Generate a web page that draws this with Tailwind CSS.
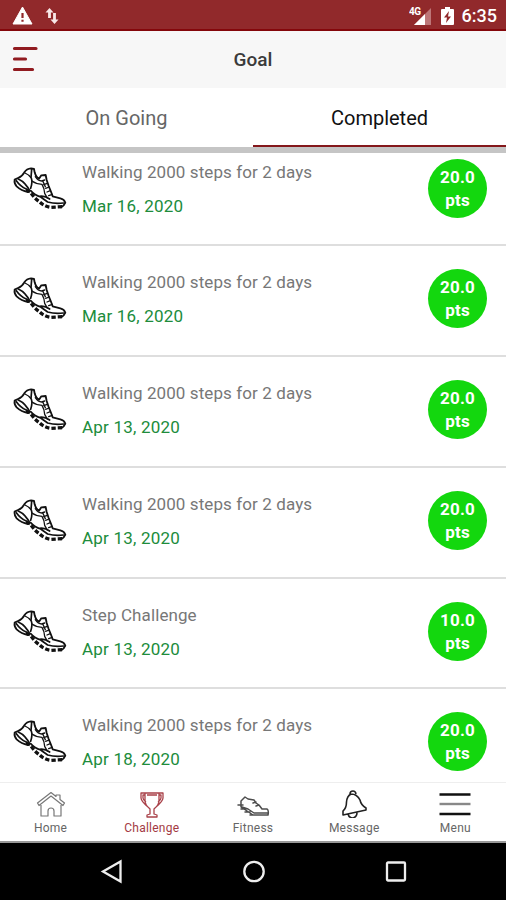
<!DOCTYPE html>
<html lang="en">
<head>
<meta charset="utf-8">
<title>Goal</title>
<script src="https://cdn.jsdelivr.net/npm/@tailwindcss/browser@4"></script>
</head>
<body class="bg-white">
<svg class="hidden">
  <symbol id="shoe" viewBox="0 0 240 195">
    <g fill="none" stroke="#111" stroke-linecap="round" stroke-linejoin="round">
      <path stroke-width="5.500" d="M44 71 Q42 82 50 91 Q64 104 84 108 M44 71 L54 66 Q66 62 73 49 Q80 38 93 37 L102 39 L104 49 Q108 64 117 68 L124 58 L137 57 L140 72 L146 90 Q153 106 158 121 L181 127 Q193 130 196 140 Q192 150 183 154"/>
      <path stroke-width="5" d="M55 69 Q70 76 76 85 Q84 94 88 102 M49 74 Q60 90 80 100 M95 40 L93 64 Q99 75 92 97"/>
      <path stroke-width="4" d="M75 51 Q86 56 92 64 M96 75 Q108 84 126 85 Q133 96 134 112 L142 126 M106 62 Q114 75 125 75 L134 72 M128 74 L136 92 M131 86 L142 82 M137 97 L147 93 M141 108 L151 104 M146 119 L157 115"/>
      <path stroke-width="5" d="M92 104 Q104 118 122 123 L143 138 Q165 144 190 141 M118 121 Q134 118 149 129"/>
      <path stroke-width="10" stroke-dasharray="13 6" stroke-linecap="butt" d="M78 102 L90 107 Q103 127 119 138 Q132 151 153 154 L188 152"/>
    </g>
  </symbol>
</svg>
<div class="w-[506px] h-[900px] flex flex-col overflow-hidden bg-white font-['Roboto','Noto_Sans',sans-serif]">
  <header class="h-[31px] shrink-0 bg-[#91292b] border-b-2 border-[#84070b] flex items-center justify-between pl-[12px] pr-[9px] text-white">
    <div class="flex items-center gap-[12px] pt-[2px]">
      <svg width="21" height="19" viewBox="0 0 21 19"><path d="M10.5 1 20 18H1Z" fill="#fff" stroke="#fff" stroke-linejoin="round"/><path d="M10.5 7v5M10.5 13.700v2" stroke="#91292b" stroke-width="2.200"/></svg>
      <svg width="14" height="18" viewBox="0 0 14 18" fill="none" stroke="#f8e8e8" stroke-width="2.800"><path d="M4.500 11V3M9.500 6v8"/><path d="M.5 5.500 4.500 1l4 4.500ZM5.500 12.500l4 4.500 4-4.500Z" fill="#f8e8e8" stroke="none"/></svg>
    </div>
    <div class="flex items-center pt-[2px]">
      <svg width="24" height="20" viewBox="0 0 24 20"><path d="M5 19 22 2v17Z" fill="#bd7678"/><path d="M5 19 16 8V19Z" fill="#fff"/><text x="0" y="9" font-size="10" font-weight="700" fill="#fff" letter-spacing="-.5">4G</text></svg>
      <svg class="ml-[8px]" width="13" height="20" viewBox="0 0 13 20"><path d="M4 1h5v2h3q1 0 1 1v14q0 1-1 1H1q-1 0-1-1V4q0-1 1-1h3Z" fill="#fff"/><path d="M8 5 3 11.500h3L5 17l5-6.500H7Z" fill="#91292b"/></svg>
      <span class="ml-[8px] text-[18px] leading-[20px] font-medium">6:35</span>
    </div>
  </header>
  <div class="h-[57px] shrink-0 bg-[#f7f7f7] grid grid-cols-3 items-center">
    <svg class="ml-[12px] -mt-[1px]" width="27" height="26" viewBox="0 0 27 26" stroke="#911b20" stroke-width="3.200" stroke-linecap="round"><path d="M2.500 2.500h21.500M2.500 13h11M2.500 23.500h18"/></svg>
    <h1 class="text-center text-[19px] font-medium text-[#3b3b3b] pt-[1px]">Goal</h1>
  </div>
  <nav class="h-[65px] shrink-0 grid grid-cols-2 border-b-[6px] border-[#c5c5c5] text-[20px] text-center leading-[61px]">
    <div class="text-[#666]">On Going</div>
    <div class="text-[#111] border-b-[2px] border-[#84171b] h-[59px]">Completed</div>
  </nav>
  <main class="flex-1 min-h-0 overflow-hidden"><div id="list" class="-mt-[17.5px]"></div></main>
  <nav class="h-[61px] shrink-0 border-t border-[#eee] border-b-2 border-b-[#999] grid grid-cols-5 bg-white text-[12px] leading-[14px] text-[#666] text-center tracking-[0.25px]">
    <div class="flex flex-col items-center pt-[8px] gap-[2px]">
      <svg width="30" height="28" viewBox="0 0 30 28" fill="none" stroke="#777" stroke-width="1.200" stroke-linejoin="round"><path d="M15 1.500 1.500 12 3 14.500 15 5l12 9.500 1.500-2.500L24 8.500V4h-4v1.500ZM5 14v11h7v-5q0-3 3-3t3 3v5h7V14"/></svg>
      <span>Home</span>
    </div>
    <div class="flex flex-col items-center pt-[8px] gap-[2px] text-[#a33a43]">
      <svg width="28" height="28" viewBox="0 0 28 28" fill="none" stroke="#a94149" stroke-width="1.300" stroke-linejoin="round"><path d="M7 2h14v7q0 5-4 8l-1 1v5l3 1v2H9v-2l3-1v-5l-1-1q-4-3-4-8ZM7 2H3v5q0 3 7 9M21 2h4v5q0 3-7 9M7 4H5v3q0 2 3 4M21 4h2v3q0 2-3 4M9 4h10"/></svg>
      <span>Challenge</span>
    </div>
    <div class="flex flex-col items-center pt-[8px] gap-[2px]">
      <svg width="34" height="28" viewBox="0 0 34 28" fill="none" stroke="#4d4d4d" stroke-width="1.500" stroke-linejoin="round" stroke-linecap="round"><path d="M5 10 9 6l3 2 6 1 2 3 3 2 3 4h5q2 1 1 6H17l-6-4-6-4ZM6 16l6 2 6 4h14M2 14h5M5 18h5M9 21h5M14 24h5M17 12l3-1M20 15l3-1"/></svg>
      <span>Fitness</span>
    </div>
    <div class="flex flex-col items-center pt-[7px] gap-[3px]">
      <svg width="30" height="28" viewBox="0 0 30 28" fill="none" stroke="#222" stroke-width="1.600" stroke-linejoin="round"><path d="M12 4Q8 6 7.500 12q0 6-3.500 9v4l23-5v-2q-5-3-6-8-3-6-9-6ZM11 4q0-3 3-3 2.500 0 3 3M9 24q1 4 5 4 4-1 4-5.500"/></svg>
      <span>Message</span>
    </div>
    <div class="flex flex-col items-center pt-[8px] gap-[2px]">
      <svg width="32" height="28" viewBox="0 0 32 28" stroke-width="2.400"><path d="M.5 3.500h31M.5 23h31" stroke="#111"/><path d="M.5 13h31" stroke="#888"/></svg>
      <span>Menu</span>
    </div>
  </nav>
  <footer class="h-[57px] shrink-0 bg-black flex items-center justify-between px-[99px]">
    <svg width="24" height="26" viewBox="0 0 24 26" fill="none" stroke="#eee" stroke-width="2.300"><path d="M21.500 2.500v20L4 12.500Z"/></svg>
    <svg width="24" height="24" viewBox="0 0 24 24" fill="none" stroke="#eee" stroke-width="2.300"><circle cx="12" cy="11.500" r="9.700"/></svg>
    <svg width="22" height="22" viewBox="0 0 22 22" fill="none" stroke="#eee" stroke-width="2.300"><rect x="2" y="1.500" width="18" height="18" rx="1"/></svg>
  </footer>
</div>
<script>
const goals = [
  ["Walking 2000 steps for 2 days", "Mar 16, 2020", "20.0"],
  ["Walking 2000 steps for 2 days", "Mar 16, 2020", "20.0"],
  ["Walking 2000 steps for 2 days", "Apr 13, 2020", "20.0"],
  ["Walking 2000 steps for 2 days", "Apr 13, 2020", "20.0"],
  ["Step Challenge", "Apr 13, 2020", "10.0"],
  ["Walking 2000 steps for 2 days", "Apr 18, 2020", "20.0"],
];
document.getElementById("list").innerHTML = goals.map(([title, date, points]) => `
  <article class="h-[110.75px] flex border-b-2 border-[#dedede] pr-[19px]">
    <svg class="w-[80px] h-[65px] shrink-0 mt-[20px]"><use href="#shoe"/></svg>
    <div class="flex-1 pl-[2px] pt-[25px] text-[17px] leading-[22px]">
      <p class="text-[#777] tracking-[0.1px]">${title}</p>
      <p class="mt-[12px] text-[#208c3b] tracking-[0.2px]">${date}</p>
    </div>
    <div class="mt-[23px] w-[59px] h-[59px] rounded-full bg-[#13d70e] text-white text-[17px] leading-[23px] font-bold text-center pt-[7px] tracking-[0.2px]">${points}<br>pts</div>
  </article>`).join("");
</script>
</body>
</html>
